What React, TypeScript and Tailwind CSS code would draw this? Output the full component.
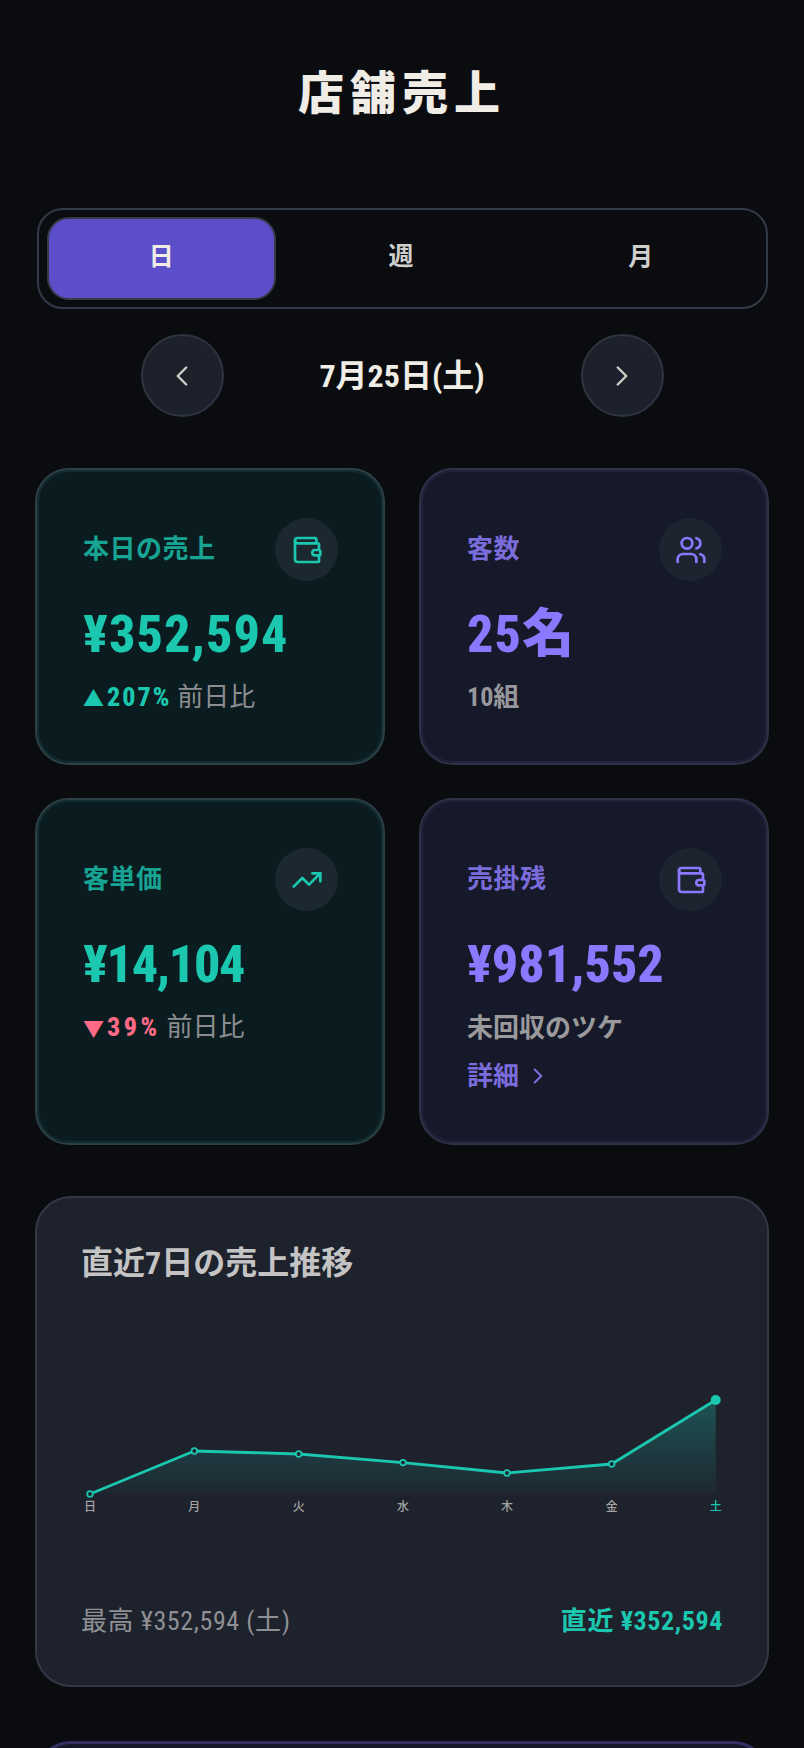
import React from 'react';
import { ChevronLeft, ChevronRight, TrendingUp, Users, Wallet } from 'lucide-react';

const points = [
    { label: '日', x: 7, y: 111 },
    { label: '月', x: 111.3, y: 68 },
    { label: '火', x: 215.7, y: 71 },
    { label: '水', x: 320, y: 79.6 },
    { label: '木', x: 424, y: 90 },
    { label: '金', x: 528.7, y: 81 },
    { label: '土', x: 632.7, y: 17 },
];

const StatCard = ({ tone, label, icon: Icon, value, tall, valueClass, children }: any) => {
    const teal = tone === 'teal';
    return (
        <div className={`rounded-[34px] border-2 pl-[46px] pr-[45px] pt-[48px] ${tall ? 'h-[347px]' : 'h-[297px]'} ${teal ? 'bg-[#0b1c20] border-[#2d4046] shadow-[inset_0_0_0_2px_#132c32]' : 'bg-[#161929] border-[#2f3247] shadow-[inset_0_0_0_2px_#20223a]'}`}>
            <div className="flex h-[63px] items-center justify-between">
                <span className={`-mt-[2px] text-[26px] leading-9 font-bold tracking-[0.5px] ${teal ? 'text-[#17a493]' : 'text-[#7b6cdb]'}`}>{label}</span>
                <div className={`flex size-[63px] items-center justify-center rounded-full ${teal ? 'bg-[#1c282f] text-[#1cc7b0]' : 'bg-[#1c2430] text-[#8b78ff]'}`}>
                    <Icon size={32} />
                </div>
            </div>
            <div className={`mt-[24px] text-[52px] leading-[60px] font-extrabold [font-stretch:85%] ${valueClass} ${teal ? 'text-[#1cc7b0]' : 'text-[#8b78ff]'}`}>{value}</div>
            {children}
        </div>
    );
};

const Delta = ({ mark, value, color, spacing }: any) => (
    <div className="mt-[14px] flex items-baseline text-[26px] leading-9">
        <span className={`text-[21px] leading-none ${color}`}>{mark}</span>
        <span className={`ml-[3px] font-extrabold [font-stretch:87%] ${spacing} ${color}`}>{value}</span>
        <span className="ml-[6px] text-[#8c8d90]">前日比</span>
    </div>
);

export default function App() {
    return (
        <div className="h-[1748px] w-[804px] overflow-hidden bg-[#0a0c10] px-[35px] text-[#f0ede6] [font-family:Roboto,'Noto_Sans_CJK_JP',sans-serif]">
            <header className="flex h-[186px] items-center justify-center">
                <h1 className="text-[46px] leading-none font-black tracking-[6px]">店舗売上</h1>
            </header>

            <div className="mx-[2px] mr-[1px] mt-[22px] flex h-[101px] gap-[11px] rounded-[26px] border-2 border-[#333a47] py-[7px] pl-2 pr-[11px] text-[25px] font-bold">
                <button className="w-[229px] rounded-[22px] border-2 border-[#373c4a] bg-[#5b4ec8] pb-1">日</button>
                <button className="w-[229px] pb-1 text-[#cfcfcc]">週</button>
                <button className="w-[229px] pb-1 text-[#cfcfcc]">月</button>
            </div>

            <div className="mt-[25px] flex h-[83px] items-center justify-center">
                <button className="flex size-[83px] items-center justify-center rounded-full border-2 border-[#2e3440] bg-[#1c212b] text-[#d0cec8]"><ChevronLeft size={34} strokeWidth={1.7} /></button>
                <div className="w-[357px] text-center text-[32px] font-bold [font-stretch:75%]">7月25日(土)</div>
                <button className="flex size-[83px] items-center justify-center rounded-full border-2 border-[#2e3440] bg-[#1c212b] text-[#d0cec8]"><ChevronRight size={34} strokeWidth={1.7} /></button>
            </div>

            <div className="mt-[51px] grid grid-cols-[350px_350px] gap-x-[34px] gap-y-[33px]">
                <StatCard tone="teal" label="本日の売上" icon={Wallet} value="¥352,594" valueClass="tracking-[1.1px]">
                    <Delta mark="▲" value="207%" color="text-[#1cc7b0]" spacing="tracking-[2px]" />
                </StatCard>
                <StatCard tone="purple" label="客数" icon={Users} value="25名" valueClass="tracking-[1.1px]">
                    <div className="mt-[14px] text-[26px] leading-9 font-bold text-[#97989c] [font-stretch:75%]">10組</div>
                </StatCard>
                <StatCard tone="teal" label="客単価" icon={TrendingUp} value="¥14,104" tall valueClass="-tracking-[1.3px]">
                    <Delta mark="▼" value="39%" color="text-[#ff6b87]" spacing="tracking-[3.5px]" />
                </StatCard>
                <StatCard tone="purple" label="売掛残" icon={Wallet} value="¥981,552" tall valueClass="tracking-[0px]">
                    <div className="mt-[15px] text-[26px] leading-9 font-bold text-[#9a9a9c]">未回収のツケ</div>
                    <div className="mt-3 flex items-center gap-[6px] text-[26px] leading-9 font-bold text-[#7b6cdb]">
                        詳細 <ChevronRight size={26} strokeWidth={2} />
                    </div>
                </StatCard>
            </div>

            <section className="mt-[51px] h-[491px] rounded-[36px] border-2 border-[#333846] bg-[#1e222d] px-[44px] pt-[45px]">
                <h2 className="text-[32px] leading-10 font-bold text-[#c4c4c4] [font-stretch:75%]">直近7日の売上推移</h2>
                <svg className="ml-[2px] mt-[100px] block overflow-visible" width={638} height={140} viewBox="0 0 638 140">
                    <defs>
                        <linearGradient id="area" gradientUnits="userSpaceOnUse" x1="0" y1="17" x2="0" y2="111">
                            <stop offset="0%" stopColor="#1cc7b0" stopOpacity={0.3} />
                            <stop offset="100%" stopColor="#1cc7b0" stopOpacity={0.03} />
                        </linearGradient>
                    </defs>
                    <polygon fill="url(#area)" points={`7,111 ${points.map(p => `${p.x},${p.y}`).join(' ')} 632.7,111`} />
                    <polyline fill="none" stroke="#1cc7b0" strokeWidth={2.8} strokeLinejoin="round" points={points.map(p => `${p.x},${p.y}`).join(' ')} />
                    {points.map((p, i) => (
                        i === 6
                            ? <circle key={p.label} cx={p.x} cy={p.y} r={5} fill="#1cc7b0" />
                            : <circle key={p.label} cx={p.x} cy={p.y} r={2.8} fill="#1e222d" stroke="#1cc7b0" strokeWidth={1.8} />
                    ))}
                    {points.map((p, i) => (
                        <text key={p.label} x={p.x} y={127.5} textAnchor="middle" fontSize={12} fontWeight={500} fill={i === 6 ? '#1cc7b0' : '#a3a3a3'}>{p.label}</text>
                    ))}
                </svg>
                <div className="mt-[78px] flex items-center justify-between text-[26px] leading-10 tracking-[0.6px] [font-stretch:79%]">
                    <span className="text-[#8f9094]">最高 ¥352,594 (土)</span>
                    <span className="font-bold text-[#1cc7b0]">直近 ¥352,594</span>
                </div>
            </section>

            <div className="mt-[54px] h-[300px] rounded-[36px] border-[3px] border-[#352f66] bg-[#161929]" />
        </div>
    );
}
